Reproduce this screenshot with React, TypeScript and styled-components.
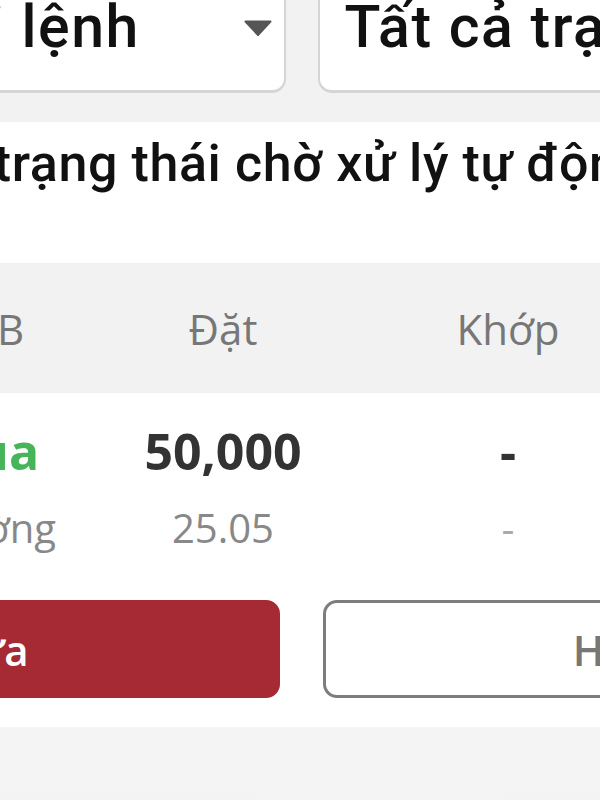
import styled, { createGlobalStyle } from 'styled-components'

const Global = createGlobalStyle`
  html, body {
    margin: 0;
    padding: 0;
    background: #ffffff;
    overflow: hidden;
  }
  body {
    width: 600px;
    height: 800px;
  }
`

const Page = styled.div`
  width: 1243px;
  margin-left: -320px;
  margin-top: -40px;
  display: flex;
  flex-direction: column;
  font-family: 'Open Sans', 'Noto Sans', sans-serif;
`

const FilterBar = styled.div`
  display: grid;
  grid-template-columns: minmax(0, 1fr) minmax(0, 1fr);
  gap: 32px;
  padding: 0 20px 29px;
  background: #f2f2f2;
`

const Select = styled.div<{ $pad: number }>`
  min-width: 0;
  height: 133px;
  box-sizing: border-box;
  display: flex;
  align-items: center;
  gap: 12px;
  padding: 0 12px 0 ${(p) => p.$pad}px;
  background: #ffffff;
  border: 2px solid #d5d5d5;
  border-bottom-width: 3px;
  border-radius: 14px;
`

const SelectLabel = styled.span`
  flex: 1;
  min-width: 0;
  overflow: hidden;
  white-space: nowrap;
  font-family: Roboto, 'Noto Sans', sans-serif;
  font-weight: 500;
  font-size: 59px;
  letter-spacing: 1.5px;
  color: #111111;
`

const Caret = () => (
  <svg width="28" height="16" viewBox="0 0 28 16" style={{ marginTop: 4 }}>
    <path d="M1.5 1.5 H26.5 L14 15 Z" fill="#555555" stroke="#555555" strokeWidth="2" strokeLinejoin="round" />
  </svg>
)

const Note = styled.div`
  height: 141px;
  box-sizing: border-box;
  padding: 12px 0 0 140px;
  background: #ffffff;
  font-family: Roboto, 'Noto Sans', sans-serif;
  font-weight: 500;
  font-size: 52px;
  letter-spacing: 0.6px;
  line-height: 60px;
  color: #111111;
  white-space: nowrap;
`

const TableRow = styled.div`
  display: grid;
  grid-template-columns: 240px 238px 332px 1fr;
  padding-left: 184px;
`

const HeadRow = styled(TableRow)`
  height: 130px;
  align-items: center;
  background: #f2f2f2;
`

const HeadCell = styled.div`
  text-align: center;
  font-size: 42px;
  color: #777777;
  white-space: nowrap;
`

const Body = styled.div`
  display: flex;
  flex-direction: column;
  padding: 28px 20px 29px;
  background: #ffffff;
`

const BodyRow = styled(TableRow)`
  margin-left: -20px;
`

const MainCell = styled.div<{ $color?: string }>`
  text-align: center;
  font-size: 50px;
  line-height: 60px;
  font-weight: 700;
  color: ${(p) => p.$color || '#333333'};
  white-space: nowrap;
`

const SubCell = styled.div<{ $color?: string }>`
  text-align: center;
  font-size: 40px;
  line-height: 48px;
  color: ${(p) => p.$color || '#888888'};
  white-space: nowrap;
`

const SubRow = styled(BodyRow)`
  margin-top: 23px;
`

const Actions = styled.div`
  display: grid;
  grid-template-columns: 1fr 1fr;
  gap: 43px;
  margin-top: 48px;
`

const ActionButton = styled.button<{ $primary?: boolean }>`
  height: 98px;
  box-sizing: border-box;
  border-radius: 14px;
  border: 3px solid ${(p) => (p.$primary ? '#a52a33' : '#7d7d7d')};
  background: ${(p) => (p.$primary ? '#a52a33' : '#ffffff')};
  color: ${(p) => (p.$primary ? '#ffffff' : '#777777')};
  font-family: 'Open Sans', 'Noto Sans', sans-serif;
  font-weight: 600;
  font-size: 42px;
`

const Footer = styled.div`
  height: 120px;
  background: linear-gradient(#f4f4f4, #f4f4f4 50%, #eeeeee);
`

export default function App() {
  return (
    <>
      <Global />
      <Page>
        <FilterBar>
          <Select $pad={16}>
            <SelectLabel>Tất cả loại lệnh</SelectLabel>
            <Caret />
          </Select>
          <Select $pad={25}>
            <SelectLabel>Tất cả trạng thái</SelectLabel>
            <Caret />
          </Select>
        </FilterBar>
        <Note>Lệnh ở trạng thái chờ xử lý tự động</Note>
        <HeadRow>
          <HeadCell>M/B</HeadCell>
          <HeadCell>Đặt</HeadCell>
          <HeadCell>Khớp</HeadCell>
          <HeadCell>Trạng thái</HeadCell>
        </HeadRow>
        <Body>
          <BodyRow>
            <MainCell $color="#46b55a">Mua</MainCell>
            <MainCell>50,000</MainCell>
            <MainCell>-</MainCell>
            <MainCell>Chờ</MainCell>
          </BodyRow>
          <SubRow>
            <SubCell>Thường</SubCell>
            <SubCell>25.05</SubCell>
            <SubCell $color="#aaaaaa">-</SubCell>
            <SubCell>09:15</SubCell>
          </SubRow>
          <Actions>
            <ActionButton $primary>Sửa</ActionButton>
            <ActionButton>Hủy</ActionButton>
          </Actions>
        </Body>
        <Footer />
      </Page>
    </>
  )
}
